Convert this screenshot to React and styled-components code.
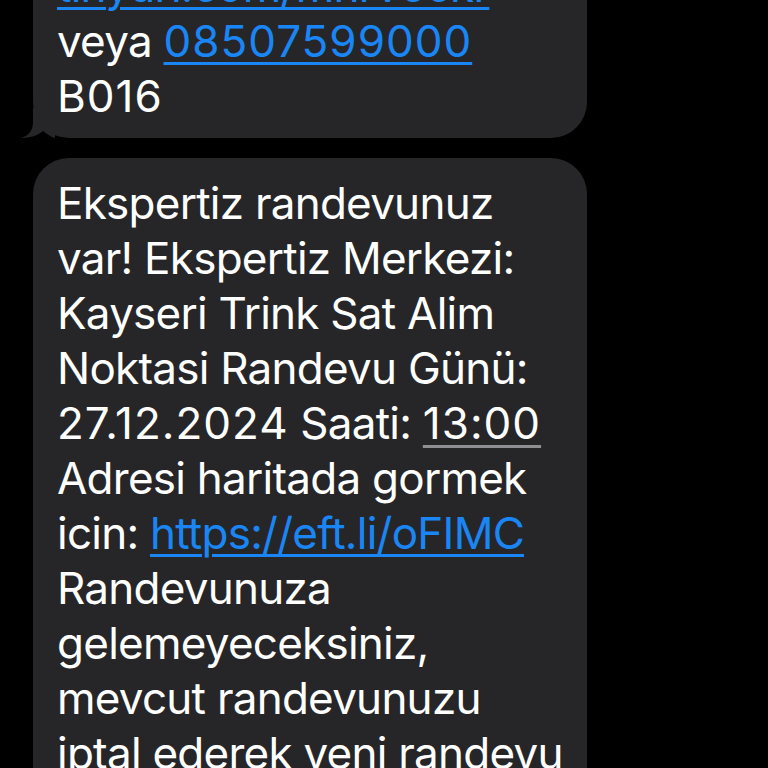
import React from "react"
import styled, { createGlobalStyle } from "styled-components"

const Global = createGlobalStyle`
  html, body {
    margin: 0;
    padding: 0;
    background: #000;
    overflow: hidden;
  }
  body {
    font-family: Inter, "Liberation Sans", sans-serif;
  }
`

const Thread = styled.div`
  display: flex;
  flex-direction: column;
  gap: 20px;
  width: 768px;
  height: 768px;
  overflow: hidden;
  padding-left: 33px;
  box-sizing: border-box;
`

const Bubble = styled.div`
  position: relative;
  width: 554px;
  box-sizing: border-box;
  flex-shrink: 0;
  background: #262628;
  border-radius: 36px;
  padding: ${(p) => (p.$first ? "18px 20px 14px 24px" : "18px 20px 18px 24px")};
  margin-top: ${(p) => p.$offset || 0}px;
  color: #fff;
  font-size: 44px;
  line-height: 55px;
  letter-spacing: -0.75px;
`

const Line = styled.div`
  white-space: nowrap;
`

const Num = styled.span`
  letter-spacing: 1px;
`

const Link = styled.span`
  color: #1a86f6;
  text-decoration: underline;
  text-decoration-thickness: 3px;
  text-underline-offset: 5px;
  text-decoration-skip-ink: auto;
`

const Time = styled.span`
  letter-spacing: 1px;
  text-decoration: underline;
  text-decoration-color: #8e8e93;
  text-decoration-thickness: 3px;
  text-underline-offset: 6px;
`

const Tail = styled.svg`
  position: absolute;
  left: -12px;
  bottom: 0;
  width: 34px;
  height: 30px;
`

const BubbleTail = () => (
  <Tail viewBox="0 0 34 30">
    <path
      d="M 12 0 L 12 14 C 12 22 8 28 0 30 C 8 30 16 28 22 23 C 26 26 30 29 34 30 L 34 0 Z"
      fill="#262628"
    />
  </Tail>
)

const App = () => {
  return (
    <>
      <Global />
      <Thread>
        <Bubble $first $offset={-59}>
          <Line>
            <Link>tinyurl.com/mhrv6ckr</Link>
          </Line>
          <Line>
            veya{" "}
            <Link>
              <Num>08507599000</Num>
            </Link>
          </Line>
          <Line>
            <Num>B016</Num>
          </Line>
          <BubbleTail />
        </Bubble>
        <Bubble>
          <Line>Ekspertiz randevunuz</Line>
          <Line>var! Ekspertiz Merkezi:</Line>
          <Line>Kayseri Trink Sat Alim</Line>
          <Line>Noktasi Randevu Günü:</Line>
          <Line>
            <Num>27.12.2024</Num> Saati: <Time>13:00</Time>
          </Line>
          <Line>Adresi haritada gormek</Line>
          <Line>
            icin: <Link>https://eft.li/oFIMC</Link>
          </Line>
          <Line>Randevunuza</Line>
          <Line>gelemeyeceksiniz,</Line>
          <Line>mevcut randevunuzu</Line>
          <Line>iptal ederek yeni randevu</Line>
          <Line>alabilirsiniz.</Line>
        </Bubble>
      </Thread>
    </>
  )
}

export default App
